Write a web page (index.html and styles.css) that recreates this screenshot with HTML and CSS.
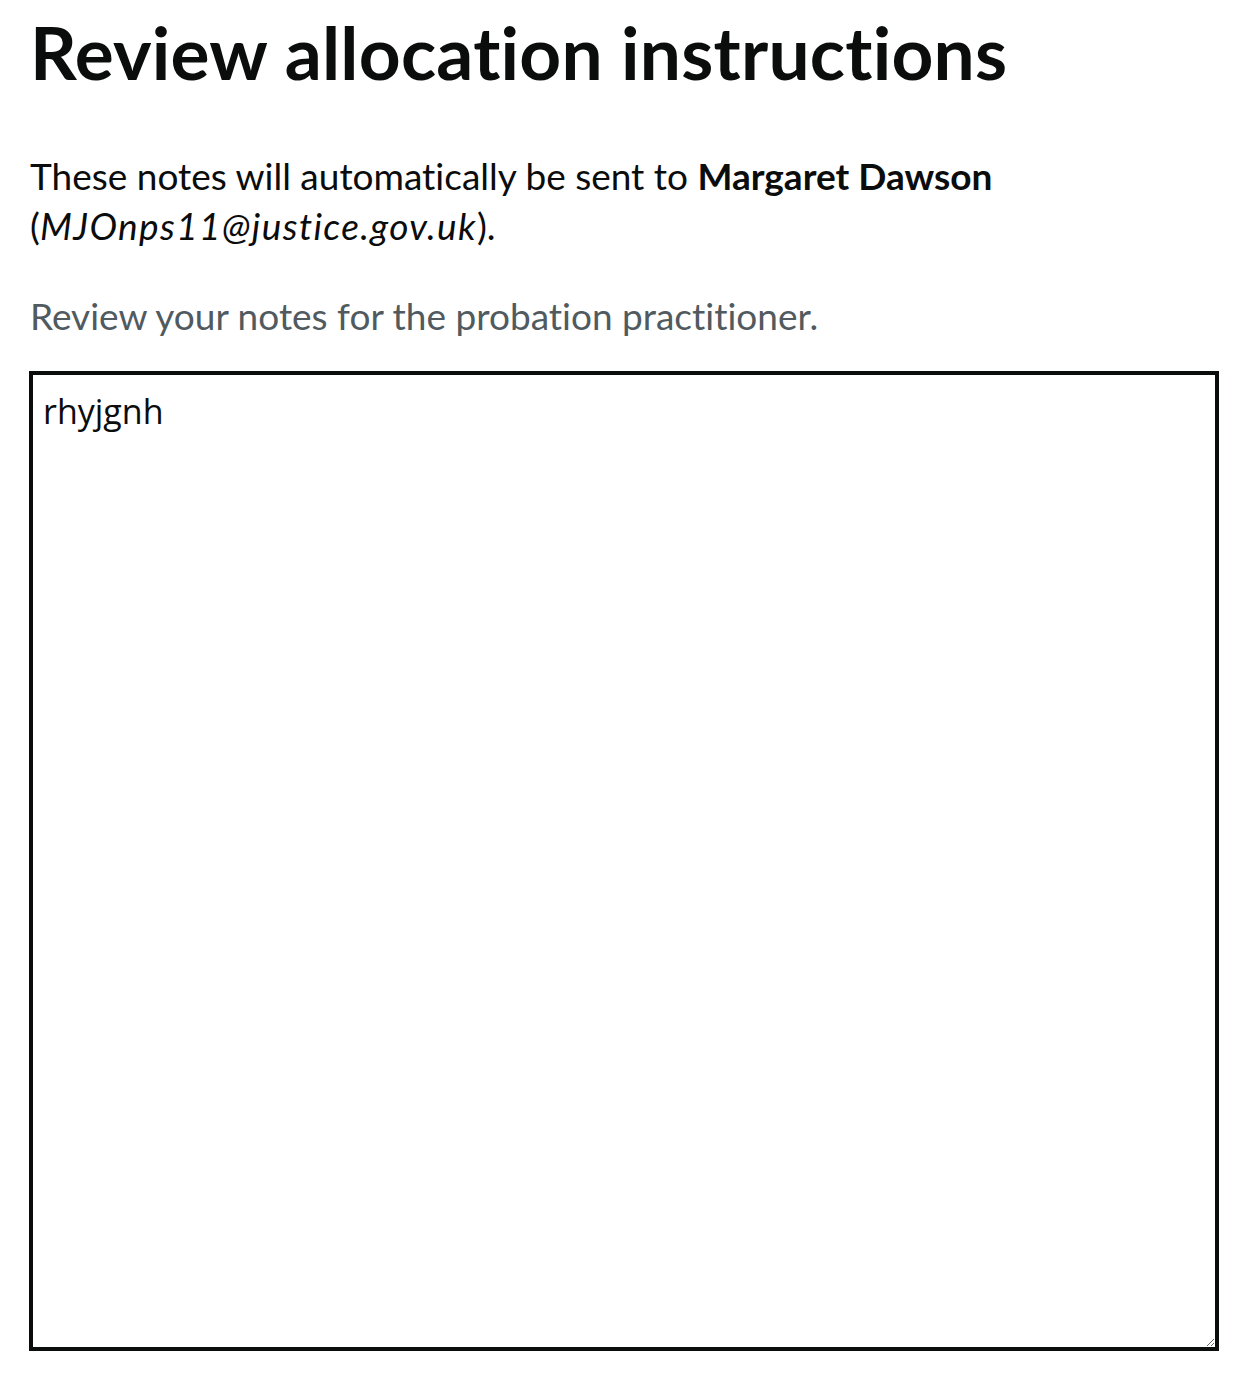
FILE: index.html
```html
<!DOCTYPE html>
<html lang="en">
  <head>
    <meta charset="UTF-8" />
    <meta name="viewport" content="width=device-width, initial-scale=1.0" />
    <title>Review allocation instructions</title>
    <link rel="stylesheet" href="styles.css">
  </head>
  <body>
    <main class="side">
      <h1 class="overskrift">Review allocation instructions</h1>
      <p class="tekst">
        These notes will automatically be sent to <strong>Margaret Dawson</strong>
        (<em>MJOnps11@justice.gov.uk</em>).
      </p>
      <p class="hint">Review your notes for the probation practitioner.</p>
      <textarea class="noter">rhyjgnh</textarea>
    </main>
  </body>
</html>
```

FILE: styles.css
```css
* {
  margin: 0;
  padding: 0;
  box-sizing: border-box;
}

body {
  background-color: #ffffff;
  color: #0b0c0c;
  font-family: Lato, "Noto Sans", sans-serif;
  font-variant-ligatures: none;
}

.side {
  padding: 12px 25px 0 30px;
  display: flex;
  flex-direction: column;
}

.overskrift {
  font-size: 73px;
  line-height: 80px;
  font-weight: 700;
  letter-spacing: 0.25px;
  margin-bottom: 59px;
}

.tekst {
  font-size: 37px;
  line-height: 50px;
  margin-bottom: 40px;
}

.tekst strong {
  font-weight: 700;
}

.tekst em {
  letter-spacing: 1.4px;
}

.hint {
  font-size: 37px;
  line-height: 50px;
  color: #505a5f;
  margin-bottom: 30px;
}

.noter {
  display: block;
  width: 1190px;
  height: 980px;
  margin-left: -1px;
  border: 4px solid #0b0c0c;
  padding: 14px 10px;
  font-family: "Open Sans", sans-serif;
  font-size: 34px;
  line-height: 44px;
  color: #0b0c0c;
  resize: vertical;
}
```
